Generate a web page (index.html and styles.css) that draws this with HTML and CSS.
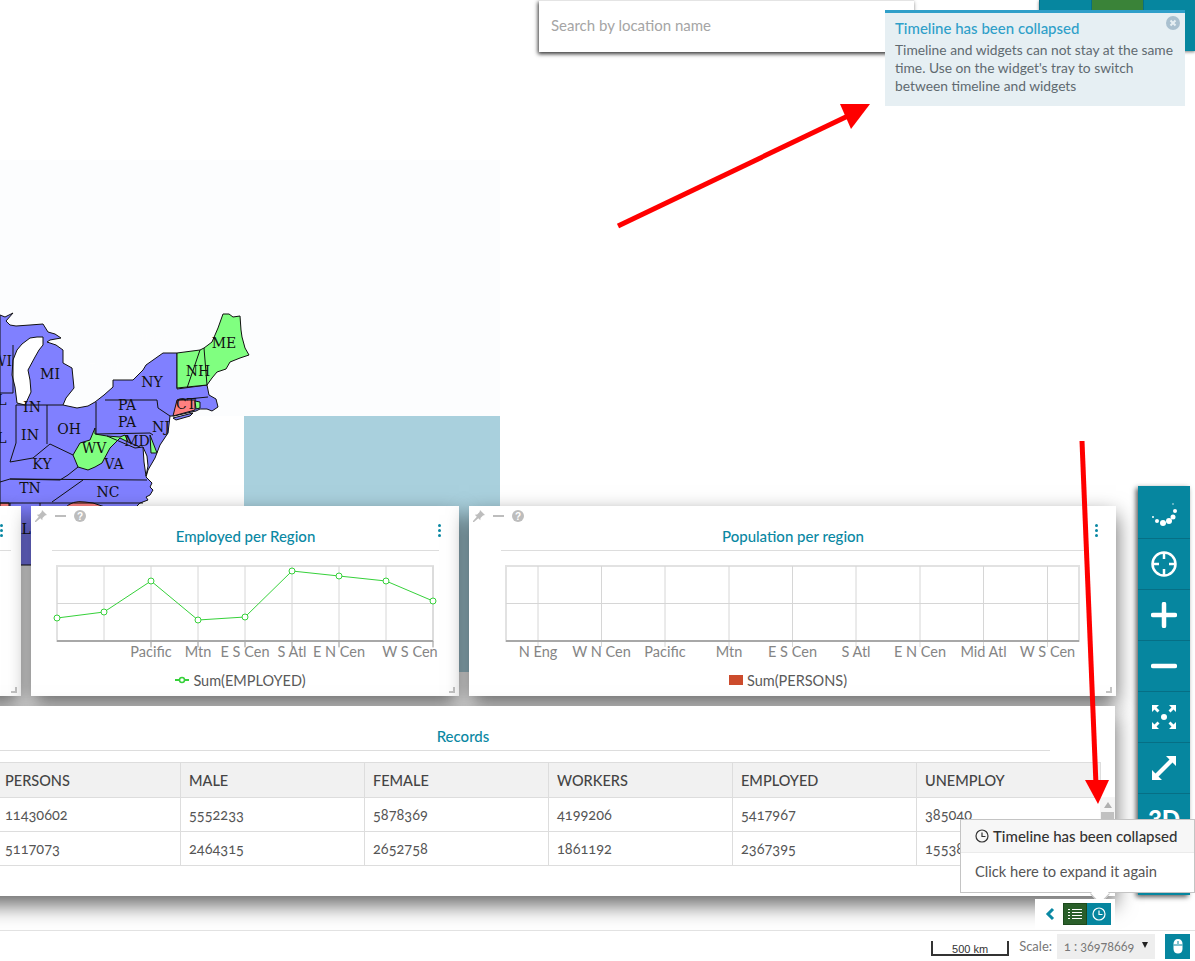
FILE: index.html
```html
<!DOCTYPE html>
<html lang="en">
<head>
<meta charset="utf-8">
<title>Map viewer</title>
<link rel="stylesheet" href="styles.css">
</head>
<body>
<div class="map">
<svg class="map-svg" width="500" height="512" viewBox="0 160 500 512">
  <rect class="tile" x="0" y="160" width="500" height="256"/>
  <rect class="sea" x="244" y="416" width="256" height="256"/>
  <g class="ghost"><text x="133" y="341">Ottawa</text><text x="89" y="371">Toronto</text><text x="150" y="432">New York</text></g>
  <g class="states">
    <path class="p" d="M0,315L5,317L13,313L6,321L10,325L16,326L30,325L43,324L48,332L55,334L61,338L50,340L47,342L56,345L63,350L63,363L72,368L74,388L66,398L63,405L77,408L88,406L95,402L104,395L113,387L113,380L133,380L143,370L146,365L163,353L177,353L177,389L207,385L209,395L216,399L218,407L212,411L207,409L200,409L196,411L174,416L170,416L168,433L160,445L155,458L148,470L146,477L152,483L150,487L153,490L150,495L146,497L148,500L140,503L137,506L130,520L110,565L0,565Z"/>
    <path class="p" d="M173,418L193,413L190,416L176,420Z"/>
    <path class="w" d="M43,337L37,337L30,338L22,344L17,350L13,360L12,375L15,387L17,403L25,405L31,392L30,380L28,370L35,357L39,350L43,345Z"/>
    <path class="w" d="M143,447L147,456L148,466L146,476L144,462Z"/>
    <path class="g" d="M212,342L218,328L223,314L229,314L233,317L240,316L241,330L242,337L245,348L249,355L240,358L230,362L226,369L217,372L212,378L207,385L177,388L177,353L200,350L204,348Z"/>
    <path class="g" d="M95,428L95,434L107,436L120,437L125,435L128,442L120,438L114,444L110,448L102,463L95,467L88,470L78,467L73,455L80,443L90,440Z"/>
    <path class="g" d="M150,435L157,453L151,453Z"/>
    <path class="r" d="M177,400L195,400L195,410L173,416Z"/>
    <path class="g" d="M195,401L200,402L200,408L196,409Z"/>
    <path class="r" d="M65,508Q72,500 85,502L93,503L108,508L108,520L65,520Z"/>
    <path class="r" d="M0,503L9,503L9,508L0,508Z"/>
    <path class="l" d="M204,348L207,385M200,350L187,388M177,400L208,397M105,400L157,400L158,408L170,416M96,402L96,434L150,433L153,435M16,405L63,405M47,405L47,444M16,405L16,443L10,462M0,393L13,393M13,345L13,393M10,462L33,458L50,444L73,455M78,467L68,475L60,480L10,479L0,482M10,479L147,480M83,480L52,502M0,503L143,503M10,503L10,565M40,503L40,565M107,436L135,448L143,447M128,442L140,447"/>
    <g class="labels">
      <text x="224" y="348">ME</text><text x="198" y="376">NH</text><text x="152" y="387">NY</text><text x="186" y="409">CT</text>
      <text x="127" y="410">PA</text><text x="127" y="427">PA</text><text x="161" y="432">NJ</text><text x="137" y="446">MD</text>
      <text x="114" y="469">VA</text><text x="94" y="453">WV</text><text x="69" y="434">OH</text><text x="30" y="440">IN</text>
      <text x="32" y="412">IN</text><text x="50" y="379">MI</text><text x="2" y="366">WI</text><text x="2" y="405">L</text><text x="2" y="443">L</text>
      <text x="42" y="469">KY</text><text x="30" y="493">TN</text><text x="108" y="497">NC</text><text x="21" y="534">AL</text>
    </g>
  </g>
</svg>
</div>

<div class="search"><span class="search-hint">Search by location name</span></div>
<div class="top-tools"><span class="top-tool"></span><span class="top-tool top-tool-on"></span><span class="top-tool"></span></div>

<main class="dock">
  <div class="chart-row">
    <section class="panel panel-a">
      <div class="kebab"><i></i><i></i><i></i></div>
      <h2 class="panel-title"></h2>
      <span class="corner"></span>
    </section>
    <section class="panel panel-b">
      <div class="panel-tools">
        <svg width="14" height="14" viewBox="0 0 14 14"><path class="tool-ico" d="M8 1l5 5-2 .5-2.500 2.500-.2 2.300-2-2L2 13l-1 0 0-1 3.800-4.300-2-2 2.300-.2L7.600 3z"/></svg>
        <svg width="14" height="14" viewBox="0 0 14 14"><rect class="tool-ico" x="1" y="6" width="11" height="2"/></svg>
        <svg width="14" height="14" viewBox="0 0 14 14"><circle class="tool-ico" cx="7" cy="7" r="6"/><text class="tool-q" x="7" y="10.500">?</text></svg>
      </div>
      <div class="kebab"><i></i><i></i><i></i></div>
      <h2 class="panel-title">Employed per Region</h2>
      <svg class="chart" width="428" height="112" viewBox="31 556 428 112">
        <rect class="frame" x="57" y="566" width="376" height="75"/>
        <path class="grid" d="M57,603.500H433M104,566V641M151,566V648M198,566V648M245,566V648M292,566V648M339,566V648M386,566V641M433,566V648"/>
        <path class="axis" d="M57,641H433"/>
        <path class="tick" d="M151,641V647M198,641V647M245,641V647M292,641V647M339,641V647M433,641V647"/>
        <polyline class="series" points="57,618 104,612 151,581 198,620 245,617 292,571 339,576 386,581 433,601"/>
        <g class="dots"><circle cx="57" cy="618" r="3"/><circle cx="104" cy="612" r="3"/><circle cx="151" cy="581" r="3"/><circle cx="198" cy="620" r="3"/><circle cx="245" cy="617" r="3"/><circle cx="292" cy="571" r="3"/><circle cx="339" cy="576" r="3"/><circle cx="386" cy="581" r="3"/><circle cx="433" cy="601" r="3"/></g>
        <g class="xlabels"><text x="151" y="657">Pacific</text><text x="198" y="657">Mtn</text><text x="245" y="657">E S Cen</text><text x="292" y="657">S Atl</text><text x="339" y="657">E N Cen</text><text x="410" y="657">W S Cen</text></g>
      </svg>
      <div class="legend"><svg width="14" height="8" viewBox="0 0 14 8"><path class="leg-line" d="M0,4H14"/><circle class="leg-dot" cx="7" cy="4" r="2.500"/></svg><span>Sum(EMPLOYED)</span></div>
      <span class="corner"></span>
    </section>
    <section class="panel panel-c">
      <div class="panel-tools">
        <svg width="14" height="14" viewBox="0 0 14 14"><path class="tool-ico" d="M8 1l5 5-2 .5-2.500 2.500-.2 2.300-2-2L2 13l-1 0 0-1 3.800-4.300-2-2 2.300-.2L7.600 3z"/></svg>
        <svg width="14" height="14" viewBox="0 0 14 14"><rect class="tool-ico" x="1" y="6" width="11" height="2"/></svg>
        <svg width="14" height="14" viewBox="0 0 14 14"><circle class="tool-ico" cx="7" cy="7" r="6"/><text class="tool-q" x="7" y="10.500">?</text></svg>
      </div>
      <div class="kebab"><i></i><i></i><i></i></div>
      <h2 class="panel-title">Population per region</h2>
      <svg class="chart" width="647" height="112" viewBox="469 556 647 112">
        <rect class="frame" x="506" y="566" width="573" height="75"/>
        <path class="grid" d="M506,603.500H1079M538,566V647M601.500,566V647M665,566V647M729,566V647M792.500,566V647M856,566V647M920,566V647M983.500,566V647M1047.500,566V647"/>
        <path class="axis" d="M506,641H1079"/>
        <g class="xlabels"><text x="538" y="657">N Eng</text><text x="601.500" y="657">W N Cen</text><text x="665" y="657">Pacific</text><text x="729" y="657">Mtn</text><text x="792.500" y="657">E S Cen</text><text x="856" y="657">S Atl</text><text x="920" y="657">E N Cen</text><text x="983.500" y="657">Mid Atl</text><text x="1047.500" y="657">W S Cen</text></g>
      </svg>
      <div class="legend"><span class="swatch"></span><span>Sum(PERSONS)</span></div>
      <span class="corner"></span>
    </section>
  </div>
  <section class="panel panel-table">
    <h2 class="panel-title">Records</h2>
    <div class="table-wrap">
      <table class="records">
        <thead><tr><th>PERSONS</th><th>MALE</th><th>FEMALE</th><th>WORKERS</th><th>EMPLOYED</th><th>UNEMPLOY</th></tr></thead>
        <tbody>
          <tr><td>11430602</td><td>5552233</td><td>5878369</td><td>4199206</td><td>5417967</td><td>385040</td></tr>
          <tr><td>5117073</td><td>2464315</td><td>2652758</td><td>1861192</td><td>2367395</td><td>155389</td></tr>
        </tbody>
      </table>
      <div class="scrollbar"><span class="scroll-up"></span><span class="scroll-thumb"></span></div>
    </div>
  </section>
</main>

<nav class="toolbar">
  <button class="tb tb-first"><svg width="30" height="30" viewBox="0 0 30 30"><g class="spin"><circle cx="4" cy="20" r="1"/><circle cx="8" cy="24" r="2"/><circle cx="14" cy="26" r="3"/><circle cx="20" cy="24" r="3"/><circle cx="24" cy="20" r="2.500"/><circle cx="26" cy="14" r="2"/><circle cx="24" cy="7" r=".7"/></g></svg></button>
  <button class="tb"><svg width="28" height="28" viewBox="0 0 28 28"><circle class="st" cx="14" cy="14" r="11.500"/><path class="st" d="M14 2v7M14 19v7M2 14h7M19 14h7"/></svg></button>
  <button class="tb"><svg width="26" height="26" viewBox="0 0 26 26"><path class="thick" d="M13 2v22M2 13h22"/></svg></button>
  <button class="tb"><svg width="26" height="26" viewBox="0 0 26 26"><path class="thick" d="M2 13h22"/></svg></button>
  <button class="tb"><svg width="26" height="26" viewBox="0 0 26 26"><circle class="fill" cx="13" cy="13" r="3"/><path class="fill" d="M1 1h7L5.500 3.500l3 3-2 2-3-3L1 8zM25 1v7l-2.500-2.500-3 3-2-2 3-3L18 1zM1 25v-7l2.500 2.500 3-3 2 2-3 3L8 25zM25 25h-7l2.500-2.500-3-3 2-2 3 3L25 18z"/></svg></button>
  <button class="tb"><svg width="26" height="26" viewBox="0 0 26 26"><path class="fill" d="M25 1V11L21.500 7.500L7.500 21.500L11 25H1V15L4.500 18.500L18.500 4.500L15 1Z"/></svg></button>
  <button class="tb tb-3d">3D</button>
</nav>

<div class="toast">
  <h3 class="toast-title">Timeline has been collapsed</h3>
  <p class="toast-body">Timeline and widgets can not stay at the same time. Use on the widget's tray to switch between timeline and widgets</p>
  <svg class="toast-x" width="14" height="14" viewBox="0 0 14 14"><circle class="x-bg" cx="7" cy="7" r="7"/><path class="x-fg" d="M4.500 4.500l5 5M9.500 4.500l-5 5"/></svg>
</div>

<svg class="arrows" width="1195" height="961" viewBox="0 0 1195 961">
  <path class="arrow-line" d="M618,226L850,115"/><path class="arrow-head" d="M870,104L840,104L851,129Z"/>
  <path class="arrow-line" d="M1082,441L1096,785"/><path class="arrow-head" d="M1098,804L1085,780L1109,780Z"/>
</svg>

<div class="popover">
  <div class="pop-head"><svg width="14" height="14" viewBox="0 0 14 14"><circle class="clock" cx="7" cy="7" r="6"/><path class="clock" d="M7 3.500V7.500H10.500"/></svg><span>Timeline has been collapsed</span></div>
  <div class="pop-body">Click here to expand it again</div>
  <span class="pop-tip"></span>
</div>

<div class="tray">
  <svg width="10" height="14" viewBox="0 0 10 14"><path class="chev" d="M8 2L3 7l5 5"/></svg>
  <span class="tray-btn tray-list"><svg width="14" height="12" viewBox="0 0 14 12"><path class="wht" d="M4 1.500h10M4 4.500h10M4 7.500h10M4 10.500h10M0 1.500h2M0 4.500h2M0 7.500h2M0 10.500h2"/></svg></span>
  <span class="tray-btn tray-clock"><svg width="14" height="14" viewBox="0 0 14 14"><circle class="wht" cx="7" cy="7" r="6"/><path class="wht" d="M7 3.500V7.500H10.500"/></svg></span>
</div>

<footer class="status">
  <div class="scalebar">500 km</div>
  <span class="scale-label">Scale:</span>
  <div class="scale-select"><span>1 : 36978669</span><span class="caret"></span></div>
  <button class="mouse-btn"><svg width="12" height="16" viewBox="0 0 12 16"><path class="fill" d="M6 1C3 1 1.500 3 1.500 6v5c0 3 2 4.500 4.500 4.500s4.500-1.500 4.500-4.500V6C10.500 3 9 1 6 1z"/><path class="mouse-line" d="M1.500 7h9M6 3v3"/></svg></button>
</footer>
</body>
</html>
```
FILE: styles.css
```css
* { box-sizing: border-box; }
html, body { margin: 0; padding: 0; }
body {
  position: relative;
  width: 1195px;
  height: 961px;
  overflow: hidden;
  background: #fff;
  font-family: "Lato", "Open Sans", sans-serif;
  font-size: 14px;
  color: #555;
}

/* map canvas */
.map { position: absolute; left: 0; top: 160px; }
.map-svg { display: block; }
.tile { fill: #fcfdfe; }
.sea { fill: #a9d0dd; }
.ghost text { fill: #fff; font-family: "DejaVu Sans", sans-serif; font-size: 10px; opacity: .9; }
.p { fill: #8080ff; stroke: #111; stroke-width: 1; }
.w { fill: #fff; stroke: #111; stroke-width: 1; }
.g { fill: #80ff80; stroke: #111; stroke-width: 1; }
.r { fill: #ff8080; stroke: #111; stroke-width: 1; }
.l { fill: none; stroke: #111; stroke-width: 1; }
.labels text { fill: #111; font-family: "DejaVu Serif", serif; font-size: 14px; text-anchor: middle; }

/* search + top tools */
.search {
  position: absolute;
  left: 539px;
  top: 0;
  width: 375px;
  height: 52px;
  padding: 0 12px 4px;
  display: flex;
  align-items: center;
  background: #fff;
  border-top: 1px solid #e4e4e4;
  box-shadow: -1px 2px 4px rgba(0, 0, 0, .8);
}
.search-hint { font-size: 15px; color: #a5a5a5; }
.top-tools { position: absolute; left: 1039px; top: 0; display: flex; height: 51px; background: #06869f; box-shadow: 0 1px 3px rgba(0, 0, 0, .5); }
.top-tool { width: 52px; border-left: 1px solid #066f85; }
.top-tool-on { background: #3a8338; }

/* dock of widgets */
.dock {
  position: absolute;
  left: -150px;
  top: 506px;
  width: 1266px;
  display: flex;
  flex-direction: column;
  gap: 10px;
}
.chart-row { display: flex; gap: 10px; }
.panel { position: relative; background: #fff; box-shadow: 0 9px 20px rgba(0, 0, 0, .6); }
.panel-a { width: 171px; height: 190px; padding: 0 10px 0 0; }
.panel-b { width: 428px; height: 190px; padding: 0 20px 0 21px; }
.panel-c { width: 647px; height: 190px; padding: 0 31px 0 32px; }
.panel-table { width: 1265px; height: 190px; }
.panel-title {
  margin: 0;
  height: 45px;
  padding: 20px 0 0;
  font-size: 15px;
  line-height: 20px;
  font-weight: 500;
  text-align: center;
  color: #0a88a3;
  border-bottom: 1px solid #ddd;
}
.panel-table .panel-title { width: 1174px; margin-left: 26px; }
.panel-tools { position: absolute; left: 3px; top: 3px; display: flex; gap: 5.500px; }
.tool-ico { fill: #bdbdbd; }
.tool-q { fill: #fff; font-family: "Liberation Sans", sans-serif; font-size: 10px; font-weight: 700; text-anchor: middle; }
.kebab { position: absolute; right: 18px; top: 18px; display: flex; flex-direction: column; gap: 2px; }
.kebab i { display: block; width: 3px; height: 3px; border-radius: 50%; background: #0a88a3; }
.corner { position: absolute; right: 4px; bottom: 3px; width: 6px; height: 6px; border-right: 2px solid #c4c4c4; border-bottom: 2px solid #c4c4c4; }

/* charts */
.chart { display: block; margin-top: 5px; margin-left: -21px; }
.panel-c .chart { margin-left: -32px; }
.frame { fill: #fff; stroke: #e2e2e2; stroke-width: 2; }
.grid { fill: none; stroke: #d6d6d6; stroke-width: 1; }
.axis { fill: none; stroke: #a8a8a8; stroke-width: 2; }
.tick { fill: none; stroke: #a8a8a8; stroke-width: 1; }
.series { fill: none; stroke: #36d13a; stroke-width: 1; }
.dots circle { fill: #fff; stroke: #36d13a; stroke-width: 1; }
.xlabels text { fill: #858585; font-size: 14.500px; text-anchor: middle; }
.legend { height: 24px; padding-right: 10px; display: flex; justify-content: center; align-items: center; gap: 4px; color: #5a5a5a; font-size: 14.500px; }
.leg-line { stroke: #36d13a; stroke-width: 2; fill: none; }
.leg-dot { fill: #fff; stroke: #36d13a; stroke-width: 1.500; }
.swatch { width: 14px; height: 10px; background: #cc4b2c; }

/* records table */
.table-wrap { position: relative; margin: 11px 0 0 146px; width: 1119px; }
.records { border-collapse: collapse; table-layout: fixed; width: 1104px; }
.records th, .records td { width: 184px; padding: 0 8px; border: 1px solid #ddd; text-align: left; overflow: hidden; white-space: nowrap; }
.records th { height: 35px; background: #f1f1f1; color: #444; font-weight: 500; font-size: 14.500px; }
.records td { height: 34px; color: #555; font-size: 14.500px; font-variant-numeric: oldstyle-nums; }
.scrollbar { position: absolute; right: 0; top: 35px; width: 15px; height: 70px; background: #f5f5f5; display: flex; flex-direction: column; align-items: center; }
.scroll-up { margin-top: 5px; border: 4px solid transparent; border-top: 0; border-bottom: 6px solid #b0b0b0; }
.scroll-thumb { margin-top: 4px; width: 13px; height: 40px; background: #c1c1c1; }

/* right toolbar */
.toolbar {
  position: absolute;
  left: 1138px;
  top: 486px;
  width: 52px;
  height: 409px;
  display: flex;
  flex-direction: column;
  overflow: hidden;
  background: #06869f;
  box-shadow: -2px 2px 5px rgba(0, 0, 0, .65);
}
.tb { flex: none; width: 52px; height: 51px; padding: 0; margin: 0; border: 0; border-bottom: 1px solid #066f85; background: none; display: flex; align-items: center; justify-content: center; }
.tb-first { height: 53px; }
.tb-3d { color: #fff; font-family: "Lato", sans-serif; font-weight: 900; font-size: 24px; align-items: flex-start; padding-top: 10px; border: 0; }
.spin circle { fill: #fff; }
.st { fill: none; stroke: #fff; stroke-width: 2.500; }
.thick { fill: none; stroke: #fff; stroke-width: 4.500; stroke-linecap: round; }
.fill { fill: #fff; }

/* toast */
.toast {
  position: absolute;
  left: 885px;
  top: 10px;
  width: 300px;
  height: 96px;
  padding: 5px 10px;
  background: #e6eff3;
  border-top: 3px solid #2f9fc9;
}
.toast-title { margin: 0 0 3px; font-size: 15px; line-height: 20px; font-weight: 500; color: #2f9fc9; }
.toast-body { margin: 0; font-size: 13.800px; line-height: 18px; color: #5f6a70; }
.toast-x { position: absolute; right: 5px; top: 3px; }
.x-bg { fill: #a9c0cf; }
.x-fg { fill: none; stroke: #e6eff3; stroke-width: 2; }

/* annotation arrows */
.arrows { position: absolute; left: 0; top: 0; pointer-events: none; z-index: 3; }
.arrow-line { fill: none; stroke: #f00; stroke-width: 5; }
.arrow-head { fill: #f00; }

/* popover */
.popover {
  position: absolute;
  left: 960px;
  top: 819px;
  width: 235px;
  height: 74px;
  background: #fff;
  border: 1px solid #c4c4c4;
  z-index: 4;
}
.pop-head { height: 33px; padding: 0 14px; display: flex; align-items: center; gap: 4px; background: #f7f7f7; border-bottom: 1px solid #ebebeb; font-size: 15px; font-weight: 500; color: #333; }
.pop-body { padding: 8px 14px; font-size: 14.700px; line-height: 20px; color: #555; }
.clock { fill: none; stroke: #333; stroke-width: 1.200; }
.pop-tip { position: absolute; left: 132px; bottom: -9px; width: 14px; height: 14px; background: #fff; border-right: 1px solid #c4c4c4; border-bottom: 1px solid #c4c4c4; transform: rotate(45deg); }

/* tray */
.tray {
  position: absolute;
  left: 1035px;
  top: 899px;
  width: 80px;
  height: 30px;
  padding: 4px 4px 4px 10px;
  display: flex;
  align-items: stretch;
  background: #fff;
  z-index: 5;
}
.tray > svg { align-self: center; margin-right: 8px; }
.chev { fill: none; stroke: #0a88a3; stroke-width: 3; }
.tray-btn { width: 24px; display: flex; align-items: center; justify-content: center; }
.tray-list { background: #2a5f2a; border: 1px solid #1d4a1d; }
.tray-clock { background: #06869f; }
.wht { fill: none; stroke: #fff; stroke-width: 1.200; }

/* status bar */
.status {
  position: absolute;
  left: 0;
  right: 0;
  bottom: 0;
  height: 31px;
  padding: 2px 5px 2px 0;
  display: flex;
  justify-content: flex-end;
  align-items: center;
  background: #fff;
  border-top: 1px solid #e2e2e2;
}
.scalebar { width: 78px; height: 15px; margin-top: 4px; border: 2px solid #333; border-top: 0; text-align: center; font-family: "Liberation Sans", sans-serif; font-size: 11px; line-height: 13px; color: #333; padding-top: 2px; }
.scale-label { margin-left: 10px; font-size: 13px; color: #777; }
.scale-select { width: 98px; height: 25px; margin-left: 5px; padding: 0 7px; display: flex; justify-content: space-between; align-items: center; background: #eee; font-size: 12.500px; color: #777; font-variant-numeric: oldstyle-nums; }
.caret { border: 3.500px solid transparent; border-top: 6px solid #222; border-bottom: 0; margin-top: -3px; }
.mouse-btn { width: 25px; height: 25px; margin-left: 10px; padding: 0; border: 0; background: #06869f; display: flex; align-items: center; justify-content: center; }
.mouse-line { fill: none; stroke: #06869f; stroke-width: 1; }
```
